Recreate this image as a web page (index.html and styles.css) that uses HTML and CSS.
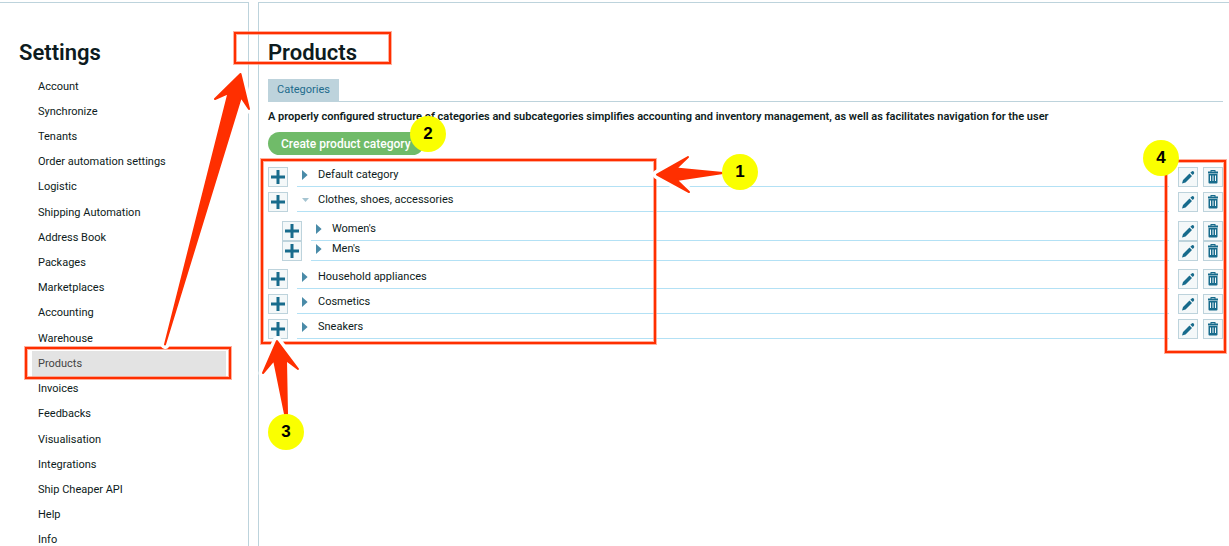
FILE: index.html
```html
<!DOCTYPE html>
<html lang="en">
<head>
<meta charset="utf-8">
<title>Settings – Products</title>
<link rel="stylesheet" href="styles.css">
</head>
<body>
<svg class="sprite" aria-hidden="true">
  <symbol id="plus" viewBox="0 0 18 18"><path d="M2 9h14M9 2v14" stroke="#176b8c" stroke-width="3" fill="none"/></symbol>
  <symbol id="pencil" viewBox="0 0 18 18"><path d="M3 15.500l1-3.500 6.500-6.500 2.500 2.500L6.500 14.500zM11.300 4.700L13 3.200q1-.4 1.700.4t.4 1.800l-1.300 1.600z" fill="#176b8c"/></symbol>
  <symbol id="trash" viewBox="0 0 18 18"><path d="M6.500 3.500V2h5v1.500H14v2H4v-2zM7.500 3v.5h3V3zM4.500 6h9v8.500q0 1-1 1h-7q-1 0-1-1zM6 7.500v5.500h1V7.500zM8.500 7.500v5.500h1V7.500zM11 7.500v5.500h1V7.500z" fill="#176b8c" fill-rule="evenodd"/></symbol>
</svg>
<div class="layout">
  <aside class="sidebar">
    <h1 class="title">Settings</h1>
    <nav class="nav">
      <a class="nav-link" href="#">Account</a>
      <a class="nav-link" href="#">Synchronize</a>
      <a class="nav-link" href="#">Tenants</a>
      <a class="nav-link" href="#">Order automation settings</a>
      <a class="nav-link" href="#">Logistic</a>
      <a class="nav-link" href="#">Shipping Automation</a>
      <a class="nav-link" href="#">Address Book</a>
      <a class="nav-link" href="#">Packages</a>
      <a class="nav-link" href="#">Marketplaces</a>
      <a class="nav-link" href="#">Accounting</a>
      <a class="nav-link" href="#">Warehouse</a>
      <a class="nav-link active" href="#" aria-current="page">Products</a>
      <a class="nav-link" href="#">Invoices</a>
      <a class="nav-link" href="#">Feedbacks</a>
      <a class="nav-link" href="#">Visualisation</a>
      <a class="nav-link" href="#">Integrations</a>
      <a class="nav-link" href="#">Ship Cheaper API</a>
      <a class="nav-link" href="#">Help</a>
      <a class="nav-link" href="#">Info</a>
    </nav>
  </aside>
  <main class="content">
    <h1 class="title">Products</h1>
    <div class="tabs"><button class="tab" type="button">Categories</button></div>
    <p class="intro">A properly configured structure of categories and subcategories simplifies accounting and inventory management, as well as facilitates navigation for the user</p>
    <button class="create" type="button">Create product category</button>
    <ul class="tree">
      <li class="row">
        <button class="icon-btn" type="button" aria-label="Add subcategory"><svg class="icon"><use href="#plus"/></svg></button>
        <button class="label" type="button"><span class="caret"></span>Default category</button>
        <button class="icon-btn" type="button" aria-label="Edit"><svg class="icon"><use href="#pencil"/></svg></button>
        <button class="icon-btn" type="button" aria-label="Delete"><svg class="icon"><use href="#trash"/></svg></button>
      </li>
      <li class="row">
        <button class="icon-btn" type="button" aria-label="Add subcategory"><svg class="icon"><use href="#plus"/></svg></button>
        <button class="label" type="button" aria-expanded="true"><span class="caret open"></span>Clothes, shoes, accessories</button>
        <button class="icon-btn" type="button" aria-label="Edit"><svg class="icon"><use href="#pencil"/></svg></button>
        <button class="icon-btn" type="button" aria-label="Delete"><svg class="icon"><use href="#trash"/></svg></button>
      </li>
      <li class="branch">
        <ul class="subtree">
          <li class="row">
            <button class="icon-btn" type="button" aria-label="Add subcategory"><svg class="icon"><use href="#plus"/></svg></button>
            <button class="label" type="button"><span class="caret"></span>Women's</button>
            <button class="icon-btn" type="button" aria-label="Edit"><svg class="icon"><use href="#pencil"/></svg></button>
            <button class="icon-btn" type="button" aria-label="Delete"><svg class="icon"><use href="#trash"/></svg></button>
          </li>
          <li class="row">
            <button class="icon-btn" type="button" aria-label="Add subcategory"><svg class="icon"><use href="#plus"/></svg></button>
            <button class="label" type="button"><span class="caret"></span>Men's</button>
            <button class="icon-btn" type="button" aria-label="Edit"><svg class="icon"><use href="#pencil"/></svg></button>
            <button class="icon-btn" type="button" aria-label="Delete"><svg class="icon"><use href="#trash"/></svg></button>
          </li>
        </ul>
      </li>
      <li class="row">
        <button class="icon-btn" type="button" aria-label="Add subcategory"><svg class="icon"><use href="#plus"/></svg></button>
        <button class="label" type="button"><span class="caret"></span>Household appliances</button>
        <button class="icon-btn" type="button" aria-label="Edit"><svg class="icon"><use href="#pencil"/></svg></button>
        <button class="icon-btn" type="button" aria-label="Delete"><svg class="icon"><use href="#trash"/></svg></button>
      </li>
      <li class="row">
        <button class="icon-btn" type="button" aria-label="Add subcategory"><svg class="icon"><use href="#plus"/></svg></button>
        <button class="label" type="button"><span class="caret"></span>Cosmetics</button>
        <button class="icon-btn" type="button" aria-label="Edit"><svg class="icon"><use href="#pencil"/></svg></button>
        <button class="icon-btn" type="button" aria-label="Delete"><svg class="icon"><use href="#trash"/></svg></button>
      </li>
      <li class="row">
        <button class="icon-btn" type="button" aria-label="Add subcategory"><svg class="icon"><use href="#plus"/></svg></button>
        <button class="label" type="button"><span class="caret"></span>Sneakers</button>
        <button class="icon-btn" type="button" aria-label="Edit"><svg class="icon"><use href="#pencil"/></svg></button>
        <button class="icon-btn" type="button" aria-label="Delete"><svg class="icon"><use href="#trash"/></svg></button>
      </li>
    </ul>
  </main>
</div>
<svg class="marks" width="1229" height="546" viewBox="0 0 1229 546" aria-hidden="true">
  <g class="frame-halo">
    <rect x="235" y="33" width="155" height="30"/>
    <rect x="26" y="348" width="204" height="30"/>
    <rect x="262" y="160" width="393" height="183"/>
    <rect x="1166" y="161" width="59" height="191"/>
  </g>
  <g class="frame">
    <rect x="235" y="33" width="155" height="30"/>
    <rect x="26" y="348" width="204" height="30"/>
    <rect x="262" y="160" width="393" height="183"/>
    <rect x="1166" y="161" width="59" height="191"/>
  </g>
  <g class="arrow-halo">
    <path d="M240.500 74L215 99L228.500 93L165 344.500L241 97L249 109z"/>
    <path d="M657 174.500L688 157L676 168.500L723 173L676.500 180L689 192z"/>
    <path d="M277 341L263 373L274 360L285 414H287L286 360L298 369z"/>
  </g>
  <g class="arrow">
    <path d="M240.500 74L215 99L228.500 93L165 344.500L241 97L249 109z"/>
    <path d="M657 174.500L688 157L676 168.500L723 173L676.500 180L689 192z"/>
    <path d="M277 341L263 373L274 360L285 414H287L286 360L298 369z"/>
  </g>
</svg>
<span class="badge badge-1">1</span>
<span class="badge badge-2">2</span>
<span class="badge badge-3">3</span>
<span class="badge badge-4">4</span>
</body>
</html>
```
FILE: styles.css
```css
* { box-sizing: border-box; }
body {
  margin: 0;
  background: #fff;
  color: #0d1b20;
  font: 11px/16px Roboto, sans-serif;
  overflow: hidden;
}
button {
  margin: 0;
  padding: 0;
  border: 0;
  background: none;
  color: inherit;
  font: inherit;
  text-align: left;
}
.sprite { display: none; }
.layout {
  display: flex;
  gap: 9px;
  height: 100vh;
  padding-top: 2px;
}
.sidebar {
  flex: 0 0 249px;
  padding: 37px 22px 0 19px;
  border: solid #bdd3dc;
  border-width: 1px 1px 0 0;
}
.content {
  flex: 1;
  min-width: 0;
  padding: 37px 6px 0 9px;
  border: solid #bdd3dc;
  border-width: 1px 0 0 1px;
}
.title {
  margin: 0;
  font-size: 22px;
  line-height: 26px;
  font-weight: 600;
}
.nav {
  display: grid;
  grid-auto-rows: 1fr;
  height: 479px;
  margin: 8px 0 0 13px;
}
.nav-link {
  display: flex;
  align-items: center;
  padding-left: 6px;
  color: #0d1b20;
  text-decoration: none;
}
.nav-link.active { background: #e3e3e3; color: #444; }
.tabs {
  display: flex;
  margin-top: 13px;
  border-bottom: 1px solid #bdd3dc;
}
.tab {
  height: 22px;
  padding: 0 9px 1px;
  background: #bdd3dc;
  color: #1d6b8c;
}
.intro {
  margin: 7px 0;
  font-weight: 600;
}
.create {
  display: block;
  height: 23px;
  padding: 0 13px;
  border-radius: 12px;
  background: #70bb69;
  color: #fff;
  font-size: 12px;
  font-weight: 500;
}
.tree, .subtree {
  margin: 0;
  padding: 0;
  list-style: none;
}
.tree {
  display: flex;
  flex-direction: column;
  gap: 5px;
  margin-top: 12px;
}
.branch { padding: 4px 0 3px 14px; }
.row {
  display: grid;
  grid-template-columns: 20px 1fr 20px 20px;
  height: 20px;
  padding-right: 5px;
}
.icon-btn {
  display: grid;
  place-items: center;
  border: 1px solid #bdd3dc;
  background: #f4f8f9;
}
.icon-btn:last-child { margin-left: 5px; width: 20px; }
.icon { display: block; width: 18px; height: 18px; }
.label {
  display: flex;
  align-items: center;
  gap: 9px;
  margin: 0 9px;
  padding: 0 0 3px 5px;
  border-bottom: 1px solid #b3e1f5;
}
.caret {
  width: 7px;
  height: 10px;
  background: #4a8ba8;
  clip-path: polygon(0 0, 80% 50%, 0 100%);
}
.caret.open {
  height: 4px;
  background: #a5c4d1;
  clip-path: polygon(0 0, 100% 0, 50% 100%);
}
.marks {
  position: absolute;
  top: 0;
  left: 0;
  pointer-events: none;
}
.frame rect { fill: none; stroke: #ff2f00; stroke-width: 2; }
.frame-halo rect { fill: none; stroke: #ff8f75; stroke-width: 4; stroke-opacity: .7; }
.arrow path {
  fill: #ff2f00;
  stroke: #ff2f00;
  stroke-width: 2;
  stroke-linejoin: round;
}
.arrow-halo path {
  fill: #fff;
  stroke: #fff;
  stroke-width: 9;
  stroke-linejoin: round;
}
.badge {
  position: absolute;
  display: grid;
  place-items: center;
  width: 36px;
  height: 36px;
  border-radius: 50%;
  background: #faff00;
  color: #000;
  font: 700 17px/20px "Liberation Sans", sans-serif;
}
.badge-1 { left: 722px; top: 154px; }
.badge-2 { left: 410px; top: 116px; }
.badge-3 { left: 268px; top: 414px; }
.badge-4 { left: 1143px; top: 140px; }
```
